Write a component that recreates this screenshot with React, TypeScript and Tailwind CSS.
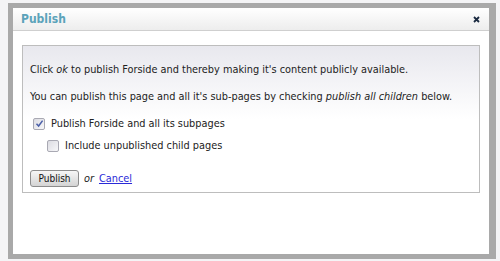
import React from 'react';

const font = { fontFamily: '"DejaVu Sans Condensed", "DejaVu Sans", sans-serif' };

const Check: React.FC<{ checked?: boolean }> = ({ checked }) => (
  <span className="inline-flex h-[12px] w-[12px] items-center justify-center rounded-[2px] border border-[#a9a9b3] bg-gradient-to-br from-[#dcdce2] to-[#f7f7f9]">
    {checked && (
      <svg width="9" height="9" viewBox="0 0 9 9" aria-hidden="true">
        <path d="M1.5 4.8 L3.6 7 L7.6 1.6" fill="none" stroke="#4a5fa8" strokeWidth="1.5" />
      </svg>
    )}
  </span>
);

export default function App() {
  return (
    <div className="h-[261px] w-[500px] overflow-hidden bg-[#f4f4f6] pl-[8px] pt-[3px]" style={font}>
      <div className="h-[256px] w-[488px] border-b-[5px] border-l-[5px] border-r-[7px] border-t-[5px] border-[#a9a9a9] bg-white">
        <div className="flex h-[23px] items-center justify-between border-b border-[#cfcfcf] bg-gradient-to-b from-white to-[#ededed] pl-[8px] pr-[9px]">
          <span className="text-[12px] font-bold text-[#5ba3ba]">Publish</span>
          <svg width="7" height="7" viewBox="0 0 7 7" aria-label="Close">
            <path d="M1 1 L6 6 M6 1 L1 6" stroke="#1a2a40" strokeWidth="1.8" />
          </svg>
        </div>
        <div className="px-[9px] pt-[14px]">
          <div className="h-[148px] border border-[#bdbdbd] bg-gradient-to-b from-[#e8e8ee] via-white to-white px-[7px] pt-[17px] text-[10.85px] leading-[13px] text-[#222]">
            <p>
              Click <i>ok</i> to publish Forside and thereby making it's content publicly available.
            </p>
            <p className="mt-[14px]">
              You can publish this page and all it's sub-pages by checking <i>publish all children</i> below.
            </p>
            <label className="mt-[14px] flex items-center gap-[6px] pl-[3px]">
              <Check checked />
              <span>Publish Forside and all its subpages</span>
            </label>
            <label className="mt-[9px] flex items-center gap-[6px] pl-[17px]">
              <Check />
              <span>Include unpublished child pages</span>
            </label>
            <div className="mt-[18px] flex items-center gap-[5px]">
              <button className="h-[17px] w-[49px] rounded-[3px] border border-[#8c8c8c] bg-gradient-to-b from-[#f6f6f6] to-[#d4d4d4] text-[10px] font-normal text-[#111]">
                Publish
              </button>
              <i>or</i>
              <a href="#" className="text-[#2a2ad8] underline">Cancel</a>
            </div>
          </div>
        </div>
      </div>
    </div>
  );
}
